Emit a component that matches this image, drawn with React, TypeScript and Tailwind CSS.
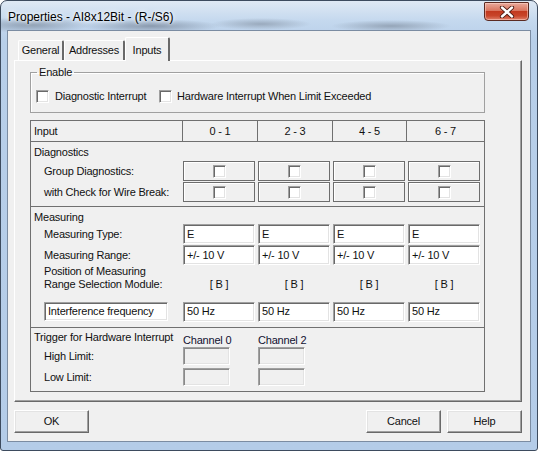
import React from "react";

const F = "font-['Liberation_Sans',Arial,sans-serif]";

function CheckBox() {
  return (
    <span className="inline-block shrink-0 w-[13px] h-[13px] bg-white border border-t-[#a0a0a0] border-l-[#a0a0a0] border-r-white border-b-white shadow-[inset_1px_1px_0_#696969,inset_-1px_-1px_0_#e3e3e3]" />
  );
}

function Edit({ text, w = "w-[72px]" }: { text: string; w?: string }) {
  return (
    <div
      className={`${w} h-[20px] bg-white border border-t-[#a0a0a0] border-l-[#a0a0a0] border-r-white border-b-white shadow-[inset_1px_1px_0_#696969,inset_-1px_-1px_0_#e3e3e3] flex items-center pl-[3px] text-[11px] tracking-[-0.2px] text-[#111]`}
    >
      {text}
    </div>
  );
}

function DisabledEdit() {
  return (
    <div className="w-[47px] h-[18px] bg-[#f0f0f0] border border-t-[#a0a0a0] border-l-[#a0a0a0] border-r-white border-b-white shadow-[inset_1px_1px_0_#8a8a8a,inset_-1px_-1px_0_#e3e3e3]" />
  );
}

function DiagBox() {
  return (
    <div className="w-[72px] h-[20px] border border-[#6d6d6d] shadow-[inset_1px_1px_0_#ffffff] flex items-center justify-center">
      <CheckBox />
    </div>
  );
}

function Button({ label }: { label: string }) {
  return (
    <div className="w-[75px] h-[23px] flex items-center justify-center bg-[#f0f0f0] border border-t-white border-l-white border-r-[#696969] border-b-[#696969] shadow-[inset_-1px_-1px_0_#a0a0a0,inset_1px_1px_0_#e3e3e3] text-[11px] tracking-[-0.2px] text-[#111]">
      {label}
    </div>
  );
}

function Tab({ label, w, selected }: { label: string; w: string; selected?: boolean }) {
  if (selected) {
    return (
      <div
        className={`${w} h-[24px] -mb-[1px] relative z-10 bg-[#f0f0f0] border-t border-l border-t-white border-l-white border-r-2 border-r-[#696969] rounded-t-[2px] flex items-start justify-center pt-[4px] text-[11px] tracking-[-0.2px] text-[#111]`}
      >
        {label}
      </div>
    );
  }
  return (
    <div
      className={`${w} h-[20px] bg-[#f0f0f0] border-t border-l border-t-white border-l-white border-r-2 border-r-[#696969] rounded-t-[2px] flex items-center justify-center text-[11px] tracking-[-0.2px] text-[#111]`}
    >
      {label}
    </div>
  );
}

const cols = ["0 - 1", "2 - 3", "4 - 5", "6 - 7"];
const colW = ["w-[75px]", "w-[75px]", "w-[74px]", "w-[78px]"];

export default function App() {
  return (
    <div className={`w-[538px] h-[451px] bg-white ${F}`}>
      <div className="w-[538px] h-[451px] rounded-t-[7px] rounded-b-[3px] border border-[#3d4b5e] bg-[radial-gradient(ellipse_60px_8px_at_30px_24px,#8e9fb3_0%,transparent_100%),radial-gradient(ellipse_70px_7px_at_150px_25px,#8a9aae_0%,transparent_100%),radial-gradient(ellipse_50px_6px_at_260px_23px,#9aaabd_0%,transparent_100%),radial-gradient(ellipse_60px_6px_at_390px_25px,#95a5b8_0%,transparent_100%),linear-gradient(180deg,#dfe9f4_0%,#c4d8ee_20px,#b8cfe9_40px,#b4cce8_100%)] flex flex-col px-[6px]">
        {/* Title bar */}
        <div className="h-[29px] flex items-start justify-between">
          <div className="mt-[8px] pl-[1px] text-[12px] leading-[16px] text-black [text-shadow:0_0_6px_#ffffff,0_0_3px_#ffffff]">
            Properties - AI8x12Bit - (R-/S6)
          </div>
          <div className="mt-[1px] mr-[2px] w-[45px] h-[19px] rounded-b-[4px] rounded-t-[1px] border border-[#5b2a22] bg-[linear-gradient(180deg,#e9a99b_0%,#d9755f_45%,#c2391f_50%,#c8452a_75%,#e0806a_100%)] shadow-[inset_0_0_0_1px_rgba(255,220,210,0.5)] flex items-center justify-center">
            <svg width="16" height="12" viewBox="0 0 16 12">
              <path d="M3 1.5 L13 10.5 M13 1.5 L3 10.5" stroke="#4a1a12" strokeWidth="4.2" strokeLinecap="round" />
              <path d="M3 1.5 L13 10.5 M13 1.5 L3 10.5" stroke="#ffffff" strokeWidth="2.4" strokeLinecap="round" />
            </svg>
          </div>
        </div>

        {/* Client area */}
        <div className="h-[412px] bg-[#f0f0f0] border border-[#7b8ca2] flex flex-col">
          <div className="ml-[6px] mt-[6px] w-[508px] flex flex-col">
            {/* Tabs */}
            <div className="h-[23px] flex items-end pl-[4px]">
              <Tab label="General" w="w-[46px]" />
              <Tab label="Addresses" w="w-[61px]" />
              <Tab label="Inputs" w="w-[45px]" selected />
            </div>

            {/* Tab panel */}
            <div className="h-[342px] bg-[#f0f0f0] border border-t-white border-l-white border-r-[#696969] border-b-[#696969] shadow-[inset_-1px_-1px_0_#a0a0a0] flex flex-col text-[11px] tracking-[-0.2px] text-[#111]">
              {/* Enable group */}
              <fieldset className="ml-[15px] mt-[5px] w-[455px] h-[47px] border border-[#a0a0a0] shadow-[inset_1px_1px_0_#ffffff]">
                <legend className="ml-[6px] px-[2px] leading-[13px]">Enable</legend>
                <div className="mt-[11px] pl-[5px] flex items-center h-[13px]">
                  <div className="w-[123px] flex items-center gap-[6px]">
                    <CheckBox />
                    <span className="leading-[13px]">Diagnostic Interrupt</span>
                  </div>
                  <div className="flex items-center gap-[5px]">
                    <CheckBox />
                    <span className="leading-[13px]">Hardware Interrupt When Limit Exceeded</span>
                  </div>
                </div>
              </fieldset>

              {/* Table */}
              <div className="ml-[15px] mt-[7px] w-[455px] h-[272px] border border-[#707070] flex flex-col">
                {/* Header */}
                <div className="h-[21px] flex border-b border-[#707070]">
                  <div className="w-[151px] pl-[3px] flex items-center">Input</div>
                  {cols.map((c, i) => (
                    <div key={c} className={`${colW[i]} border-l border-[#707070] flex items-center justify-center`}>
                      {c}
                    </div>
                  ))}
                </div>

                {/* Diagnostics */}
                <div className="h-[65px] border-b border-[#707070] flex flex-col pt-[4px]">
                  <div className="pl-[3px] leading-[13px] h-[13px]">Diagnostics</div>
                  <div className="mt-[2px] h-[20px] flex items-center">
                    <div className="w-[152px] pl-[13px]">Group Diagnostics:</div>
                    <div className="flex gap-[3px]">
                      <DiagBox />
                      <DiagBox />
                      <DiagBox />
                      <DiagBox />
                    </div>
                  </div>
                  <div className="mt-[1px] h-[20px] flex items-center">
                    <div className="w-[152px] pl-[13px]">with Check for Wire Break:</div>
                    <div className="flex gap-[3px]">
                      <DiagBox />
                      <DiagBox />
                      <DiagBox />
                      <DiagBox />
                    </div>
                  </div>
                </div>

                {/* Measuring */}
                <div className="h-[121px] border-b border-[#707070] flex flex-col pt-[4px]">
                  <div className="pl-[3px] leading-[13px] h-[13px]">Measuring</div>
                  <div className="h-[20px] flex items-center">
                    <div className="w-[152px] pl-[13px]">Measuring Type:</div>
                    <div className="flex gap-[3px]">
                      <Edit text="E" />
                      <Edit text="E" />
                      <Edit text="E" />
                      <Edit text="E" />
                    </div>
                  </div>
                  <div className="mt-[1px] h-[20px] flex items-center">
                    <div className="w-[152px] pl-[13px]">Measuring Range:</div>
                    <div className="flex gap-[3px]">
                      <Edit text="+/- 10 V" />
                      <Edit text="+/- 10 V" />
                      <Edit text="+/- 10 V" />
                      <Edit text="+/- 10 V" />
                    </div>
                  </div>
                  <div className="flex items-end">
                    <div className="w-[152px] pl-[13px] leading-[13px]">
                      <div>Position of Measuring</div>
                      <div>Range Selection Module:</div>
                    </div>
                    <div className="flex gap-[3px] leading-[13px]">
                      {[0, 1, 2, 3].map((i) => (
                        <div key={i} className="w-[72px] text-center">
                          [ B ]
                        </div>
                      ))}
                    </div>
                  </div>
                  <div className="mt-[11px] h-[19px] flex items-center">
                    <div className="w-[152px] pl-[13px]">
                      <div className="w-[124px] h-[19px] bg-white border border-t-[#a0a0a0] border-l-[#a0a0a0] border-r-white border-b-white shadow-[inset_1px_1px_0_#696969,inset_-1px_-1px_0_#e3e3e3] flex items-center pl-[3px]">
                        Interference frequency
                      </div>
                    </div>
                    <div className="flex gap-[3px]">
                      <Edit text="50 Hz" />
                      <Edit text="50 Hz" />
                      <Edit text="50 Hz" />
                      <Edit text="50 Hz" />
                    </div>
                  </div>
                </div>

                {/* Trigger */}
                <div className="flex-1 flex flex-col pt-[3px]">
                  <div className="h-[16px] flex items-start">
                    <div className="w-[152px] pl-[3px] leading-[13px]">Trigger for Hardware Interrupt</div>
                    <div className="flex gap-[3px] pt-[3px] leading-[13px] text-[#101030]">
                      <div className="w-[72px]">Channel 0</div>
                      <div className="w-[72px]">Channel 2</div>
                    </div>
                  </div>
                  <div className="h-[18px] flex items-center">
                    <div className="w-[152px] pl-[13px]">High Limit:</div>
                    <div className="flex gap-[28px]">
                      <DisabledEdit />
                      <DisabledEdit />
                    </div>
                  </div>
                  <div className="mt-[3px] h-[18px] flex items-center">
                    <div className="w-[152px] pl-[13px]">Low Limit:</div>
                    <div className="flex gap-[28px]">
                      <DisabledEdit />
                      <DisabledEdit />
                    </div>
                  </div>
                </div>
              </div>
            </div>

            {/* Buttons */}
            <div className="mt-[8px] flex items-center">
              <Button label="OK" />
              <div className="flex-1" />
              <div className="flex gap-[6px]">
                <Button label="Cancel" />
                <Button label="Help" />
              </div>
            </div>
          </div>
        </div>
      </div>
    </div>
  );
}
